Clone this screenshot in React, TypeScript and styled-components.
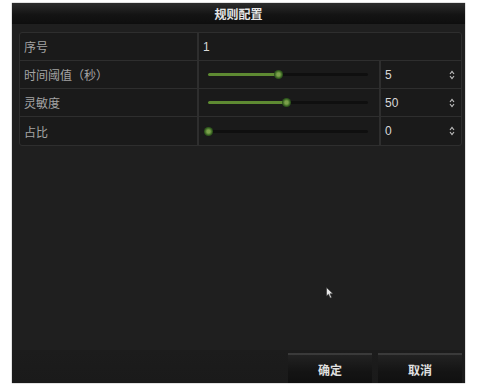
import { Fragment } from 'react';
import styled, { createGlobalStyle } from 'styled-components';

const GlobalStyle = createGlobalStyle`
  html, body {
    margin: 0;
    padding: 0;
    background: #ffffff;
    font-family: "Noto Sans CJK SC", "Liberation Sans", sans-serif;
  }
`;

const Page = styled.div`
  width: 477px;
  height: 388px;
  padding: 3px 0 0 12px;
  box-sizing: border-box;
`;

const Dialog = styled.div`
  position: relative;
  width: 453px;
  height: 380px;
  background: #1f1f1f;
  display: flex;
  flex-direction: column;
  box-shadow: 0 0 1px #555;
`;

const TitleBar = styled.div`
  height: 21px;
  display: flex;
  align-items: center;
  justify-content: center;
  background: linear-gradient(#2c2c2c, #141414 55%, #0e0e0e);
  color: #e6e6e6;
  font-size: 12px;
  font-weight: bold;
`;

const Body = styled.div`
  flex: 1;
  padding: 8px 3px 0 7px;
`;

const Table = styled.div`
  display: grid;
  grid-template-columns: 177px 182px 1fr;
  border: 1px solid #2e2e2e;
  border-radius: 3px;
  background: #1a1a1a;
`;

const Cell = styled.div<{ $span?: number; $last?: boolean; $first?: boolean }>`
  grid-column: span ${(p) => p.$span ?? 1};
  height: 28px;
  display: flex;
  align-items: center;
  box-sizing: border-box;
  padding: 0 6px 0 4px;
  border-bottom: ${(p) => (p.$last ? 'none' : '1px solid #2e2e2e')};
  border-left: ${(p) => (p.$first ? 'none' : '2px solid #2e2e2e')};
  color: #c2c2c2;
  font-size: 12px;
`;

const Label = styled(Cell)`
  color: #a4a4a4;
`;

const SliderCell = styled(Cell)`
  padding: 0;
`;

const Value = styled.span`
  flex: 1;
  color: #d8d8d8;
  font-family: "Liberation Sans", sans-serif;
  font-size: 12px;
`;

const Track = styled.div`
  position: relative;
  flex: 1;
  height: 3px;
  margin: 0 11px 0 9px;
  background: #0f0f0f;
  border-radius: 2px;
`;

const Fill = styled.div`
  height: 100%;
  background: #5e8a32;
  border-radius: 2px;
`;

const Thumb = styled.div`
  position: absolute;
  top: 50%;
  width: 9px;
  height: 9px;
  margin: -4.5px 0 0 -4.5px;
  border-radius: 50%;
  background: radial-gradient(circle, #7aa04a 0 25%, #2f5a1c 60%, #223c18 100%);
`;

const Footer = styled.div`
  height: 33px;
  display: flex;
  justify-content: flex-end;
  align-items: flex-end;
  gap: 6px;
  padding-right: 3px;
  background: linear-gradient(#1c1c1c, #1a1a1a);
`;

const Button = styled.div`
  width: 84px;
  height: 30px;
  box-sizing: border-box;
  display: flex;
  align-items: center;
  justify-content: center;
  border-top: 2px solid #3a3a3a;
  background: linear-gradient(#222, #141414 60%, #101010);
  color: #e0e0e0;
  font-size: 12px;
  font-weight: bold;
`;

const Pointer = styled.svg`
  position: absolute;
  left: 314px;
  top: 284px;
`;

function Spinner() {
  return (
    <svg width="6" height="10" viewBox="0 0 6 10">
      <path d="M1 4 L3 1.5 L5 4 M1 6 L3 8.5 L5 6" stroke="#bdbdbd" strokeWidth="1.2" fill="none" />
    </svg>
  );
}

function Slider({ pct }: { pct: number }) {
  return (
    <Track>
      <Fill style={{ width: `${pct}%` }} />
      <Thumb style={{ left: `${pct}%` }} />
    </Track>
  );
}

const rows = [
  { label: '时间阈值（秒）', value: '5', pct: 44 },
  { label: '灵敏度', value: '50', pct: 49 },
  { label: '占比', value: '0', pct: 0 },
];

export default function App() {
  return (
    <Page>
      <GlobalStyle />
      <Dialog>
        <TitleBar>规则配置</TitleBar>
        <Body>
          <Table>
            <Label $first>序号</Label>
            <Cell $span={2}>
              <Value>1</Value>
            </Cell>
            {rows.map((r, i) => {
              const last = i === rows.length - 1;
              return (
                <Fragment key={r.label}>
                  <Label $first $last={last}>
                    {r.label}
                  </Label>
                  <SliderCell $last={last}>
                    <Slider pct={r.pct} />
                  </SliderCell>
                  <Cell $last={last}>
                    <Value>{r.value}</Value>
                    <Spinner />
                  </Cell>
                </Fragment>
              );
            })}
          </Table>
        </Body>
        <Footer>
          <Button>确定</Button>
          <Button>取消</Button>
        </Footer>
        <Pointer width="8" height="12" viewBox="0 0 8 12">
          <path d="M0.5 0.5 L0.5 9 L2.5 7.2 L4.2 11 L5.6 10.4 L4 6.8 L7 6.8 Z" fill="#e8e8e8" stroke="#333" strokeWidth="0.6" />
        </Pointer>
      </Dialog>
    </Page>
  );
}
